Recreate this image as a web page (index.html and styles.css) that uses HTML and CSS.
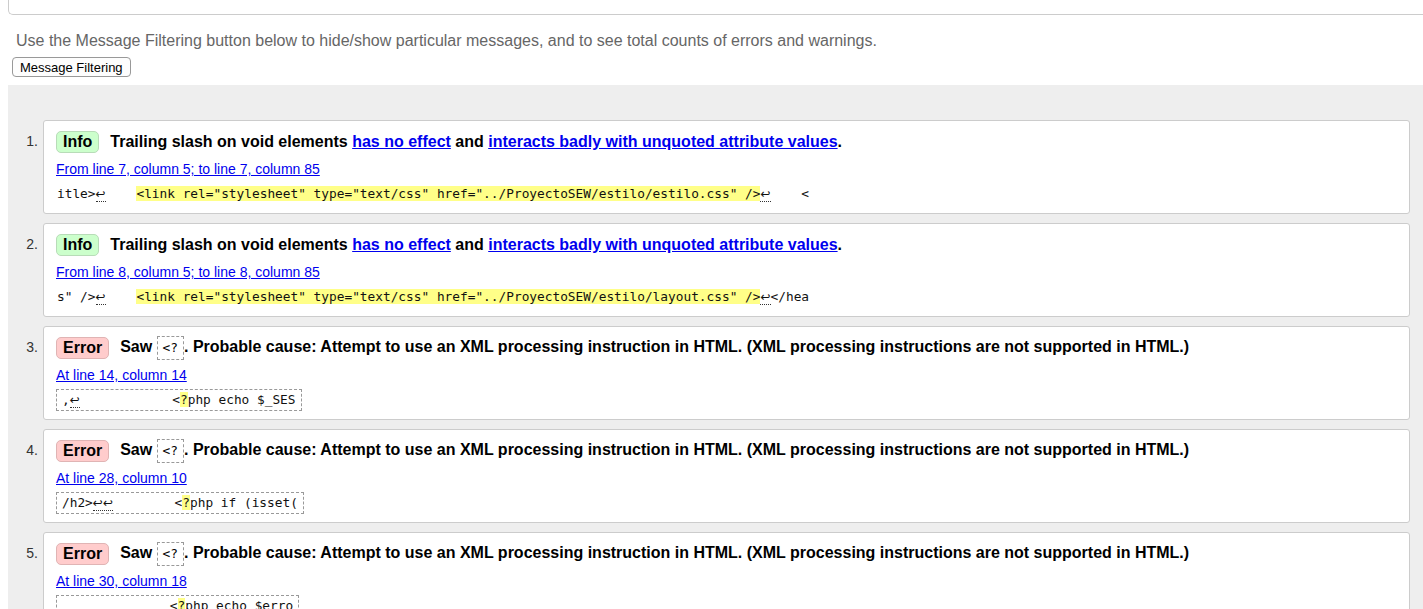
FILE: index.html
```html
<!DOCTYPE html>
<html>
<head>
<meta charset="utf-8">
<link rel="stylesheet" href="styles.css">
</head>
<body>
<div class="topbox"></div>
<p class="intro">Use the Message Filtering button below to hide/show particular messages, and to see total counts of errors and warnings.</p>
<button class="filter-btn">Message Filtering</button>
<div class="results">
  <ol class="messages">
    <li class="item">
      <span class="num">1.</span>
      <div class="card">
        <div class="head"><span class="badge info">Info</span><span class="msg">Trailing slash on void elements <a href="#">has no effect</a> and <a href="#">interacts badly with unquoted attribute values</a>.</span></div>
        <div class="loc"><a href="#">From line 7, column 5; to line 7, column 85</a></div>
        <div class="extract plain"><code>itle&gt;<b class="lf">↩</b>    <mark>&lt;link rel="stylesheet" type="text/css" href="../ProyectoSEW/estilo/estilo.css" /&gt;</mark><b class="lf">↩</b>    &lt;</code></div>
      </div>
    </li>
    <li class="item">
      <span class="num">2.</span>
      <div class="card">
        <div class="head"><span class="badge info">Info</span><span class="msg">Trailing slash on void elements <a href="#">has no effect</a> and <a href="#">interacts badly with unquoted attribute values</a>.</span></div>
        <div class="loc"><a href="#">From line 8, column 5; to line 8, column 85</a></div>
        <div class="extract plain"><code>s" /&gt;<b class="lf">↩</b>    <mark>&lt;link rel="stylesheet" type="text/css" href="../ProyectoSEW/estilo/layout.css" /&gt;</mark><b class="lf">↩</b>&lt;/hea</code></div>
      </div>
    </li>
    <li class="item">
      <span class="num">3.</span>
      <div class="card">
        <div class="head"><span class="badge error">Error</span><span class="msg">Saw <code class="inl">&lt;?</code>. Probable cause: Attempt to use an XML processing instruction in HTML. (XML processing instructions are not supported in HTML.)</span></div>
        <div class="loc"><a href="#">At line 14, column 14</a></div>
        <div class="extract"><code class="boxed">,<b class="lf">↩</b>            &lt;<mark>?</mark>php echo $_SES</code></div>
      </div>
    </li>
    <li class="item">
      <span class="num">4.</span>
      <div class="card">
        <div class="head"><span class="badge error">Error</span><span class="msg">Saw <code class="inl">&lt;?</code>. Probable cause: Attempt to use an XML processing instruction in HTML. (XML processing instructions are not supported in HTML.)</span></div>
        <div class="loc"><a href="#">At line 28, column 10</a></div>
        <div class="extract"><code class="boxed">/h2&gt;<b class="lf">↩↩</b>        &lt;<mark>?</mark>php if (isset(</code></div>
      </div>
    </li>
    <li class="item">
      <span class="num">5.</span>
      <div class="card">
        <div class="head"><span class="badge error">Error</span><span class="msg">Saw <code class="inl">&lt;?</code>. Probable cause: Attempt to use an XML processing instruction in HTML. (XML processing instructions are not supported in HTML.)</span></div>
        <div class="loc"><a href="#">At line 30, column 18</a></div>
        <div class="extract"><code class="boxed">              &lt;<mark>?</mark>php echo $erro</code></div>
      </div>
    </li>
  </ol>
</div>
</body>
</html>
```
FILE: styles.css
```css
html, body {
  background: #fff;
}
body {
  margin: 0 0 0 8px;
  font-family: "Liberation Sans", Arial, sans-serif;
  color: #000;
  overflow: hidden;
}
.topbox {
  height: 14px;
  border: 1px solid #ccc;
  border-top: none;
  border-right: none;
  border-radius: 0 0 0 5px;
}
.intro {
  margin: 17px 0 0 8px;
  font-size: 16px;
  line-height: 18px;
  color: #666;
}
.filter-btn {
  display: block;
  margin: 7px 0 0 4px;
  height: 20px;
  padding: 0 7px;
  font-family: "Liberation Sans", Arial, sans-serif;
  font-size: 13px;
  color: #000;
  background: #fdfdfd;
  border: 1px solid #999;
  border-radius: 4px;
}
.results {
  margin-top: 8px;
  background: #eee;
  padding: 35px 13px 1px 0;
}
.messages {
  list-style: none;
  margin: 0;
  padding: 0;
}
.item {
  display: flex;
  margin-bottom: 9px;
}
.num {
  width: 35px;
  flex: none;
  box-sizing: border-box;
  padding: 12px 5px 0 0;
  text-align: right;
  font-size: 14px;
  line-height: 18px;
  color: #333;
}
.card {
  flex: 1;
  background: #fff;
  border: 1px solid #ccc;
  border-radius: 3px;
  padding: 10px 12px 8px;
}
.head {
  display: flex;
  align-items: center;
  height: 22px;
}
.badge {
  display: inline-block;
  box-sizing: border-box;
  height: 22px;
  padding: 1px 6px;
  font-size: 16px;
  line-height: 18px;
  font-weight: bold;
  border: 1px solid;
  border-radius: 5px;
  margin-right: 11px;
}
.badge.info {
  background: #cfc;
  border-color: #b8dcb8;
}
.badge.error {
  background: #fcc;
  border-color: #e0b4b4;
}
.msg {
  font-size: 16px;
  line-height: 22px;
  font-weight: bold;
  white-space: nowrap;
}
.msg a, .loc a {
  color: #00e;
  text-decoration: underline;
}
.inl {
  display: inline-block;
  box-sizing: border-box;
  height: 24px;
  vertical-align: middle;
  padding: 0 5px;
  border: 1px dashed #999;
  font-family: "DejaVu Sans Mono", monospace;
  font-size: 12.8px;
  line-height: 22px;
  font-weight: normal;
}
.loc {
  margin-top: 7px;
  font-size: 14px;
  line-height: 18px;
}
.extract {
  margin-top: 5px;
  height: 22px;
}
.extract code {
  font-family: "DejaVu Sans Mono", monospace;
  font-size: 12.8px;
  white-space: pre;
  color: #111;
}
.extract.plain code {
  display: inline-block;
  line-height: 22px;
  padding-left: 1px;
}
.boxed {
  display: inline-block;
  box-sizing: border-box;
  height: 22px;
  line-height: 20px;
  padding: 0 5px;
  border: 1px dashed #999;
}
mark {
  background: #ff8;
  color: inherit;
}
.lf {
  font-family: "DejaVu Sans", sans-serif;
  font-size: 12px;
  font-weight: normal;
  border-bottom: 1px dotted #333;
  line-height: 14px;
}
```
